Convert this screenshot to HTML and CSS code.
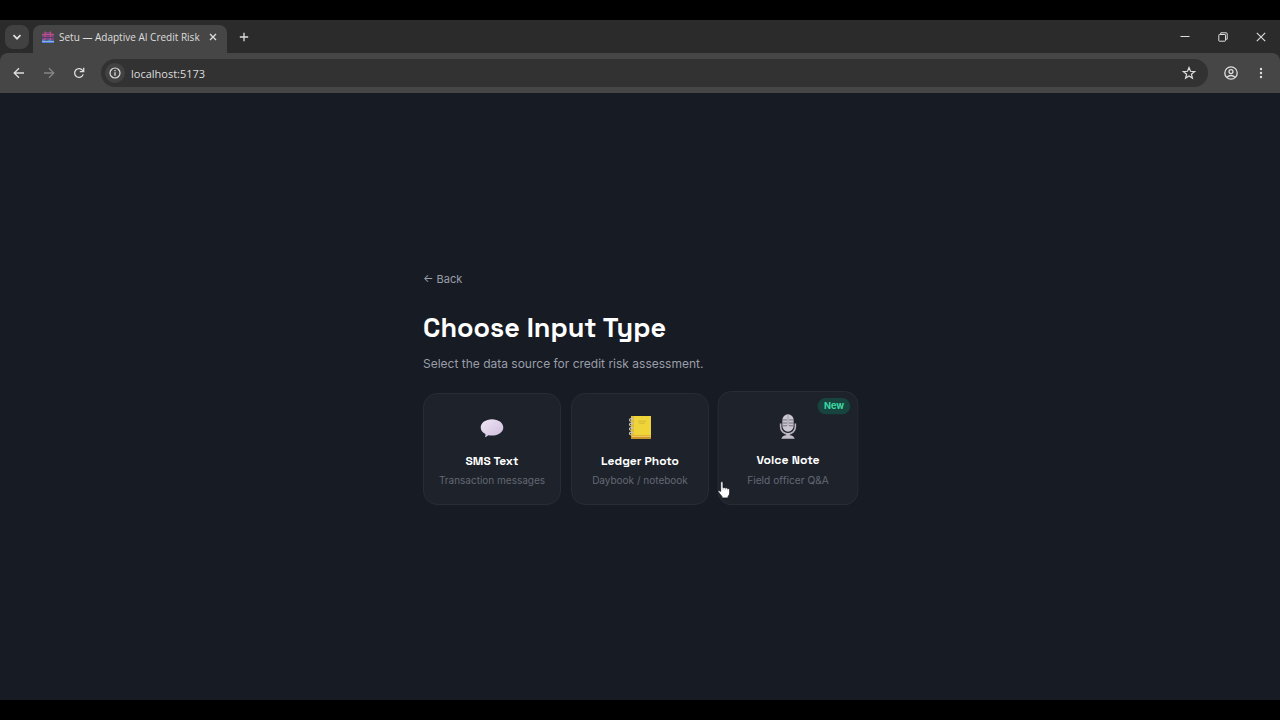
FILE: index.html
```html
<!DOCTYPE html>
<html lang="en">
<head>
  <meta charset="UTF-8" />
  <meta name="viewport" content="width=device-width, initial-scale=1.0" />
  <title>Setu — Adaptive AI Credit Risk</title>
  <link rel="stylesheet" href="styles.css">
</head>
<body>

  <!-- Browser window -->
  <header class="browser">
    <div class="tab-strip">
      <button class="tab-search" aria-label="Search tabs">
        <svg width="10" height="10" viewBox="0 0 10 10"><path d="M1.5 3.2 5 6.7l3.5-3.5" fill="none" stroke="currentColor" stroke-width="1.7"/></svg>
      </button>
      <div class="tab">
        <svg class="favicon" width="12" height="12" viewBox="0 0 12 12">
          <path d="M0 2.5h3V1h6v1.5h3V9H0z" fill="#7d4580"/>
          <path d="M0 3.5h12M3 .5V9M8.5.5V9" stroke="#b9507f" stroke-width="1.2"/>
          <path d="M0 6.5h12" stroke="#5a3c6c" stroke-width="1"/>
          <path d="M0 9q1.5-1.5 3 0t3 0 3 0 3 0v3H0z" fill="#4f7fcf"/>
          <path d="M0 10.5h12" stroke="#9cbbe8" stroke-width=".8"/>
        </svg>
        <span class="tab-title">Setu — Adaptive AI Credit Risk</span>
        <button class="icon-btn" aria-label="Close tab">
          <svg width="10" height="10" viewBox="0 0 10 10"><path d="m2 2 6 6M8 2 2 8" stroke="currentColor" stroke-width="1.3"/></svg>
        </button>
      </div>
      <button class="icon-btn new-tab" aria-label="New tab">
        <svg width="10" height="10" viewBox="0 0 10 10"><path d="M5 .8v8.4M.8 5h8.4" stroke="currentColor" stroke-width="1.3"/></svg>
      </button>
      <div class="window-controls">
        <button class="icon-btn" aria-label="Minimize">
          <svg width="10" height="10" viewBox="0 0 10 10"><path d="M.5 4.5h9" stroke="currentColor"/></svg>
        </button>
        <button class="icon-btn" aria-label="Restore">
          <svg width="10" height="10" viewBox="0 0 10 10" fill="none" stroke="currentColor"><rect x=".8" y="2.5" width="6.7" height="6.7" rx=".6"/><path d="M2.8 2.3V.8h5.4q1 0 1 1v5.4H7.7"/></svg>
        </button>
        <button class="icon-btn" aria-label="Close window">
          <svg width="10" height="10" viewBox="0 0 10 10"><path d="m.8.8 8.4 8.4M9.2.8.8 9.2" stroke="currentColor" stroke-width="1.1"/></svg>
        </button>
      </div>
    </div>

    <div class="toolbar">
      <nav class="nav-buttons" aria-label="History">
        <button class="icon-btn" aria-label="Go back">
          <svg width="12" height="12" viewBox="0 0 12 12" fill="none" stroke="currentColor" stroke-width="1.3"><path d="M11 6H1.5M6 1.2 1.2 6 6 10.8"/></svg>
        </button>
        <button class="icon-btn disabled" aria-label="Go forward" disabled>
          <svg width="12" height="12" viewBox="0 0 12 12" fill="none" stroke="currentColor" stroke-width="1.3"><path d="M1 6h9.5M6 1.2 10.8 6 6 10.8"/></svg>
        </button>
        <button class="icon-btn" aria-label="Reload">
          <svg width="12" height="12" viewBox="0 0 12 12" fill="none" stroke="currentColor" stroke-width="1.3"><path d="M10.2 7.4A4.4 4.4 0 1 1 9.6 3.4L10.6 4.6M10.7.8v3.9H6.8"/></svg>
        </button>
      </nav>
      <div class="address-bar">
        <button class="site-info" aria-label="Site information">
          <svg width="12" height="12" viewBox="0 0 12 12"><circle cx="6" cy="6" r="5" fill="none" stroke="currentColor" stroke-width="1.2"/><path d="M6 5.3v3.4M6 3v1.3" stroke="currentColor" stroke-width="1.3"/></svg>
        </button>
        <input class="address" type="text" value="localhost:5173" aria-label="Address" />
        <button class="icon-btn" aria-label="Bookmark this page">
          <svg width="14" height="14" viewBox="0 0 14 14"><path d="m7 1.6 1.5 3.7 4 .3-3.1 2.6 1 3.9L7 10l-3.4 2.1 1-3.9-3.1-2.6 4-.3z" fill="none" stroke="currentColor" stroke-width="1.2"/></svg>
        </button>
      </div>
      <button class="icon-btn profile" aria-label="Profile">
        <svg width="14" height="14" viewBox="0 0 14 14" fill="none" stroke="currentColor" stroke-width="1.3"><circle cx="7" cy="7" r="6.2"/><circle cx="7" cy="5.6" r="2"/><path d="M2.8 11.3Q7 7.7 11.2 11.3"/></svg>
      </button>
      <button class="icon-btn menu" aria-label="Menu">
        <svg width="4" height="12" viewBox="0 0 4 12" fill="currentColor"><circle cx="2" cy="2" r="1.2"/><circle cx="2" cy="6" r="1.2"/><circle cx="2" cy="10" r="1.2"/></svg>
      </button>
    </div>
  </header>

  <!-- Page -->
  <main class="page">
    <section class="chooser">
      <button class="back">← Back</button>
      <h1>Choose Input Type</h1>
      <p class="subtitle">Select the data source for credit risk assessment.</p>

      <div class="cards">
        <button class="card">
          <svg class="card-icon" width="28" height="28" viewBox="0 0 28 28">
            <defs><linearGradient id="bubble" x1="0" y1="0" x2="1" y2="1"><stop offset="0" stop-color="#f0e7f6"/><stop offset="1" stop-color="#cdbcdb"/></linearGradient></defs>
            <path d="M14 5.2c6.3 0 11.3 3.6 11.3 8.2s-5 8.2-11.3 8.2q-2 0-3.8-.4Q8.700 22.700 7 23.200q.7-1.500.4-3.300C4.500 18.400 2.700 16.100 2.700 13.400 2.700 8.800 7.700 5.200 14 5.200z" fill="url(#bubble)"/>
          </svg>
          <span class="card-title">SMS Text</span>
          <span class="card-text">Transaction messages</span>
        </button>

        <button class="card">
          <svg class="card-icon" width="28" height="28" viewBox="0 0 28 28">
            <path d="M5 2h20v23H5z" fill="#c9962e"/>
            <path d="M5 2h20v19.5H5z" fill="#f0d53a"/>
            <path d="M5 2h3v19.5H5z" fill="#e0bd3a"/>
            <path d="M6 22.5h19" stroke="#f1c75b"/>
            <path d="M12 7.2h8M13 9.2h6" stroke="#d3b735"/>
            <g fill="none" stroke="#c9c3c6" stroke-width="1.2"><path d="M7.5 5.5C4 3 2 6.5 5 7.5M7.5 10C4 7.5 2 11 5 12M7.5 14.5C4 12 2 15.5 5 16.5M7.5 19C4 16.5 2 20 5 21"/></g>
          </svg>
          <span class="card-title">Ledger Photo</span>
          <span class="card-text">Daybook / notebook</span>
        </button>

        <button class="card active">
          <span class="badge">New</span>
          <svg class="card-icon" width="28" height="28" viewBox="0 0 28 28">
            <rect x="8.5" y="2" width="11" height="17" rx="5.5" fill="#cbc6d1"/>
            <path d="M9 7.5h4M15 7.5h4M9 10.5h4M15 10.5h4M9 13.2h4M15 13.2h4" stroke="#6a6774" stroke-width=".9"/>
            <path d="M14 3v10" stroke="#a09ba7"/>
            <path d="M6.8 11v3.5a7.2 6.7 0 0 0 14.4 0V11" fill="none" stroke="#b7b2bd" stroke-width="1.6"/>
            <path d="M12.2 20.5h3.6v2q3.8.3 4.7 3.5h-13q.9-3.2 4.7-3.5z" fill="#c2bdc8"/>
          </svg>
          <span class="card-title">Voice Note</span>
          <span class="card-text">Field officer Q&amp;A</span>
          <svg class="pointer" width="14" height="18" viewBox="0 0 14 18">
            <path d="M4 1.5Q5.2.4 6.3 1.5V7q1.2-.8 2.2.3 1.2-.7 2.2.4 1.8-.4 2.1 1.3V12q0 2-1.5 3.5V17H5.2v-1.5Q3 13 1.3 10.3 1.5 8.8 4 10.5z" fill="#fff" stroke="#15181f" stroke-width=".8"/>
            <path d="M6.3 7v2M8.5 7.5v1.8M10.7 8v1.5" stroke="#8a8d95" stroke-width=".5"/>
          </svg>
        </button>
      </div>
    </section>
  </main>

</body>
</html>
```

FILE: styles.css
```css
:root {
  --page: #171b24;
  --card: #1e222b;
  --border: #282c35;
  --strip: #2b2b2b;
  --toolbar: #464646;
  --address: #323232;
  --muted: #9a9ea8;
  --dim: #646873;
}

* {
  box-sizing: border-box;
}

body {
  margin: 0;
  padding: 20px 0;
  min-height: 100vh;
  display: flex;
  flex-direction: column;
  background-color: #000;
  color: #fff;
  font-family: Inter, sans-serif;
}

button {
  padding: 0;
  border: none;
  background: none;
  color: inherit;
  font-family: inherit;
  cursor: pointer;
}

svg {
  display: block;
  flex-shrink: 0;
}

/* Browser window */
.browser {
  background-color: var(--strip);
  color: #dedede;
  font-family: "Open Sans", sans-serif;
}

.tab-strip {
  display: flex;
  align-items: center;
  height: 33px;
  padding-left: 5px;
}

.tab-search {
  display: grid;
  place-items: center;
  width: 24px;
  height: 24px;
  border-radius: 8px;
  background-color: #414141;
}

.tab {
  display: flex;
  align-items: center;
  align-self: flex-end;
  width: 194px;
  height: 28px;
  margin-left: 4px;
  padding: 0 4px 4px 9px;
  border-radius: 8px 8px 0 0;
  background-color: var(--toolbar);
}

.tab-title {
  flex: 1;
  min-width: 0;
  margin-left: 5px;
  font-size: 10px;
  white-space: nowrap;
}

.icon-btn {
  display: grid;
  place-items: center;
  flex-shrink: 0;
  width: 20px;
  height: 20px;
}

.icon-btn.disabled {
  color: #858585;
}

.new-tab {
  margin-left: 7px;
}

.window-controls {
  display: flex;
  gap: 18px;
  margin-left: auto;
  padding-right: 9px;
}

.toolbar {
  display: flex;
  align-items: center;
  height: 40px;
  padding: 0 9px;
  border-radius: 8px 8px 0 0;
  background-color: var(--toolbar);
}

.nav-buttons {
  display: flex;
  gap: 10px;
}

.address-bar {
  flex: 1;
  display: flex;
  align-items: center;
  height: 28px;
  margin-left: 12px;
  padding: 0 9px 0 4px;
  border-radius: 14px;
  background-color: var(--address);
}

.site-info {
  display: grid;
  place-items: center;
  width: 20px;
  height: 20px;
  border-radius: 50%;
  background-color: #424242;
}

.address {
  flex: 1;
  margin-left: 6px;
  padding: 0;
  border: none;
  outline: none;
  background: none;
  color: #dedede;
  font-family: inherit;
  font-size: 11px;
}

.profile {
  margin-left: 13px;
}

.menu {
  margin-left: 10px;
}

/* Page */
.page {
  flex: 1;
  display: flex;
  align-items: center;
  justify-content: center;
  padding: 0 20px 20px;
  background-color: var(--page);
}

.chooser {
  width: 100%;
  max-width: 434px;
}

.back {
  display: block;
  font-size: 11px;
  line-height: 20px;
  color: var(--muted);
}

h1 {
  margin: 23px 0 11px;
  font-family: "Space Grotesk", Inter, sans-serif;
  font-size: 27px;
  font-weight: 600;
  line-height: 32px;
}

.subtitle {
  margin: 0 0 20px;
  font-size: 12px;
  line-height: 18px;
  color: var(--muted);
}

.cards {
  display: grid;
  grid-template-columns: repeat(3, 1fr);
  gap: 10px;
}

.card {
  position: relative;
  display: flex;
  flex-direction: column;
  align-items: center;
  padding: 20px 4px 16px;
  border: 1px solid var(--border);
  border-radius: 14px;
  background-color: var(--card);
}

.card.active {
  transform: translateY(-1px) scale(1.02);
}

.card-title {
  margin-top: 11px;
  font-family: "Space Grotesk", Inter, sans-serif;
  font-size: 12px;
  font-weight: 600;
  line-height: 16px;
}

.card-text {
  margin-top: 3px;
  font-size: 10px;
  line-height: 16px;
  color: var(--dim);
}

.badge {
  position: absolute;
  top: 6px;
  right: 7px;
  padding: 0 6px;
  border-radius: 8px;
  background-color: #17443f;
  color: #3fd9a4;
  font-size: 9px;
  font-weight: 700;
  line-height: 16px;
}

.pointer {
  position: absolute;
  left: -2px;
  bottom: 5px;
}
```
